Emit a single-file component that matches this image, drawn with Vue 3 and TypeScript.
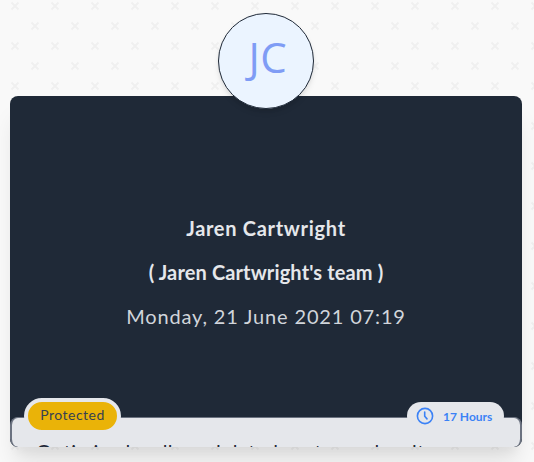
<script setup lang="ts">
interface Meeting {
  initials: string
  host: string
  team: string
  date: string
  status: string
  duration: string
  title: string
}

const meeting: Meeting = {
  initials: 'JC',
  host: 'Jaren Cartwright',
  team: "( Jaren Cartwright's team )",
  date: 'Monday, 21 June 2021 07:19',
  status: 'Protected',
  duration: '17 Hours',
  title: 'Optimized well-modulated customer loyalty',
}
</script>

<template>
  <main class="page">
    <svg class="pattern" width="534" height="462" aria-hidden="true">
      <defs>
        <pattern id="crosses" x="5" y="-4" width="40" height="40" patternUnits="userSpaceOnUse">
          <path d="M6.5 6.5l7 7M13.5 6.5l-7 7M26.5 26.5l7 7M33.5 26.5l-7 7" stroke="#f0f0f0" stroke-width="2" />
        </pattern>
      </defs>
      <rect width="534" height="462" fill="url(#crosses)" />
    </svg>
    <article class="card">
      <div class="avatar">
        <svg viewBox="0 0 94 94" aria-hidden="true">
          <text x="48.8" y="59" text-anchor="middle">{{ meeting.initials }}</text>
        </svg>
      </div>
      <div class="content">
        <header class="details">
          <h2 class="host">{{ meeting.host }}</h2>
          <h2 class="team">{{ meeting.team }}</h2>
          <p>{{ meeting.date }}</p>
        </header>
        <section class="panel">
          <span class="status">{{ meeting.status }}</span>
          <span class="duration">
            <svg viewBox="0 0 18 18" fill="none" stroke="currentColor" stroke-width="1.6" stroke-linecap="round">
              <circle cx="9" cy="9" r="7.6" />
              <path d="M8.7 5v4.3l2.3 2.6" />
            </svg>
            {{ meeting.duration }}
          </span>
          <h3>{{ meeting.title }}</h3>
        </section>
      </div>
    </article>
  </main>
</template>

<style>
body {
  margin: 0;
  overflow: hidden;
}
</style>

<style scoped>
.page {
  position: relative;
  box-sizing: border-box;
  width: 534px;
  height: 462px;
  padding: 96px 12px 15px 10px;
  overflow: hidden;
  background: #f9f9f9;
  font-family: Lato, sans-serif;
}
.pattern {
  position: absolute;
  inset: 0;
}
.card {
  position: relative;
  height: 351px;
  border-radius: 8px;
  box-shadow: 0 20px 25px -5px rgba(0, 0, 0, 0.1), 0 10px 10px -5px rgba(0, 0, 0, 0.04);
}
.avatar {
  position: absolute;
  z-index: 1;
  top: -83px;
  left: 208px;
  box-sizing: border-box;
  width: 96px;
  height: 96px;
  border: 1px solid #1f2937;
  border-radius: 50%;
  background: #ebf4ff;
  box-shadow: 0 4px 6px -1px rgba(0, 0, 0, 0.1), 0 2px 4px -1px rgba(0, 0, 0, 0.06);
}
.avatar svg {
  display: block;
}
.avatar text {
  fill: #7f9cf5;
  font: 42px "Open Sans", sans-serif;
  letter-spacing: 0.5px;
}
.content {
  display: flex;
  flex-direction: column;
  height: 100%;
  overflow: hidden;
  border-radius: 8px;
  background: #1f2937;
}
.details {
  box-sizing: border-box;
  height: 321px;
  padding-top: 118px;
  color: #e5e7eb;
  text-align: center;
}
h2,
p,
h3 {
  margin: 0;
}
h2 {
  height: 44px;
  font-size: 20px;
  font-weight: 700;
  line-height: 28px;
}
.host {
  letter-spacing: 0.7px;
}
.team {
  letter-spacing: 0.13px;
}
.details p {
  color: #d1d5db;
  font-size: 20px;
  letter-spacing: 0.84px;
  line-height: 28px;
}
.panel {
  position: relative;
  box-sizing: border-box;
  height: 30px;
  padding: 19px 24px 0;
  border: solid #6b7280;
  border-width: 1px 2px 0;
  border-radius: 8px;
  background: #e5e7eb;
}
.status,
.duration {
  position: absolute;
  box-sizing: border-box;
  display: flex;
  align-items: center;
}
.status {
  top: -20px;
  left: 12px;
  width: 97px;
  height: 36px;
  justify-content: center;
  padding-bottom: 3px;
  border: 4px solid #e5e7eb;
  border-radius: 18px;
  background: #eab308;
  color: #374151;
  font-size: 14px;
  letter-spacing: 0.5px;
}
.duration {
  top: -16px;
  right: 16px;
  width: 97px;
  height: 28px;
  padding-left: 9px;
  gap: 9px;
  border-radius: 14px;
  background: #e5e7eb;
  color: #3b82f6;
  font-size: 12px;
  font-weight: 700;
}
.duration svg {
  width: 18px;
  height: 18px;
}
h3 {
  color: #1f2937;
  font-size: 20px;
  font-weight: 400;
  letter-spacing: 0.43px;
  line-height: 28px;
  white-space: nowrap;
}
</style>
